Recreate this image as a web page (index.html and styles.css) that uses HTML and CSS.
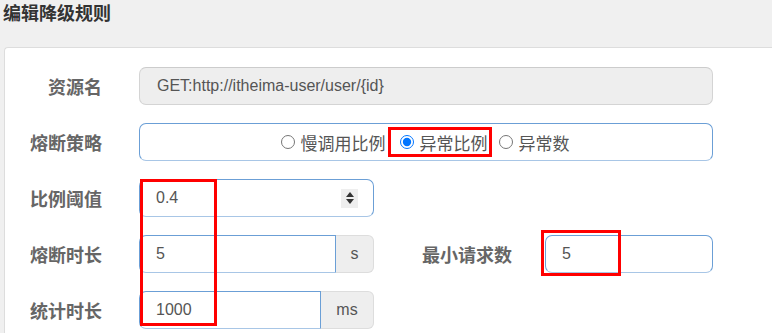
FILE: index.html
```html
<html>
    <head>
        <title>编辑降级规则</title>
        <link rel="stylesheet" href="styles.css">
    </head>
    <body>
        <h1>编辑降级规则</h1>
        <div class="panel">
            <div class="row">
                <label class="label">资源名</label>
                <input class="field readonly wide" type="text" value="GET:http://itheima-user/user/{id}" readonly />
            </div>
            <div class="row">
                <label class="label">熔断策略</label>
                <div class="field active wide radios">
                    <label class="radio"><input type="radio" name="grade" />慢调用比例</label>
                    <label class="radio marked"><input type="radio" name="grade" checked />异常比例</label>
                    <label class="radio"><input type="radio" name="grade" />异常数</label>
                </div>
            </div>
            <div class="row">
                <label class="label">比例阈值</label>
                <div class="field active number">
                    <input type="text" value="0.4" />
                    <span class="spinner"><i class="up"></i><i class="down"></i></span>
                </div>
            </div>
            <div class="row">
                <label class="label">熔断时长</label>
                <div class="group">
                    <input class="field active joined" type="text" value="5" />
                    <span class="addon">s</span>
                </div>
                <label class="label second">最小请求数</label>
                <input class="field active small" type="text" value="5" />
            </div>
            <div class="row">
                <label class="label">统计时长</label>
                <div class="group">
                    <input class="field active joined" type="text" value="1000" />
                    <span class="addon addon-ms">ms</span>
                </div>
            </div>

            <div class="mark mark-column"></div>
            <div class="mark mark-min"></div>
        </div>
    </body>
</html>
```

FILE: styles.css
```css
body {
    background: #f0f0f0;
    color: #555;
    font-family: "Liberation Sans", "Noto Sans CJK SC", sans-serif;
    margin: 0;
}

h1 {
    color: #333;
    font-family: "Noto Sans CJK SC", sans-serif;
    font-size: 18px;
    font-weight: bold;
    line-height: 24px;
    margin: 0;
    padding: 0 0 0 3px;
}

.panel {
    background: #fff;
    border: 1px solid #ddd;
    border-radius: 4px 0 0 0;
    border-right: none;
    display: flex;
    flex-direction: column;
    gap: 18px;
    margin: 23px 0 0 4px;
    padding: 19px 0 20px;
    position: relative;
}

.row {
    align-items: center;
    display: flex;
    height: 38px;
}

.label {
    color: #666;
    flex: none;
    font-family: "Noto Sans CJK SC", sans-serif;
    font-size: 18px;
    font-weight: bold;
    margin-right: 37px;
    text-align: right;
    width: 97px;
}

.label.second {
    margin-right: 33px;
    width: 138px;
}

.field {
    background: #fff;
    border: 1px solid #6b9fd6;
    border-bottom-color: #a8c6e6;
    border-radius: 7px;
    box-sizing: border-box;
    color: #555;
    font-family: "Liberation Sans", sans-serif;
    font-size: 16px;
    height: 38px;
    outline: none;
    padding: 0 16px;
}

.readonly {
    background: #eee;
    border-color: #d4d4d4;
    border-top-color: #ccc;
    padding-left: 17px;
}

.wide {
    width: 574px;
}

.radios {
    align-items: center;
    display: flex;
    font-family: "Noto Sans CJK SC", sans-serif;
    font-size: 17px;
    gap: 2px;
    justify-content: center;
    padding-left: 14px;
}

.radio {
    align-items: center;
    display: inline-flex;
}

.radio input {
    margin: 0 6px 0 0;
    width: 14px;
    height: 14px;
}

.radio.marked {
    border: 3px solid #f00;
    height: 24px;
    margin-right: 5px;
    padding: 0 1px 0 9px;
}

.number {
    align-items: center;
    display: flex;
    padding-right: 15px;
    width: 235px;
}

.number input {
    border: none;
    color: #555;
    flex: 1;
    font-family: "Liberation Sans", sans-serif;
    font-size: 16px;
    min-width: 0;
    outline: none;
    padding: 0;
}

.spinner {
    align-items: center;
    background: #eee;
    display: flex;
    flex-direction: column;
    gap: 2px;
    height: 19px;
    justify-content: center;
    width: 17px;
}

.spinner i {
    border-left: 4px solid transparent;
    border-right: 4px solid transparent;
    height: 0;
    width: 0;
}

.spinner .up {
    border-bottom: 5px solid #333;
}

.spinner .down {
    border-top: 5px solid #333;
}

.group {
    display: flex;
    width: 235px;
}

.joined {
    border-radius: 7px 0 0 7px;
    flex: 1;
    min-width: 0;
}

.addon {
    align-items: center;
    background: #eee;
    border: 1px solid #ddd;
    border-left: none;
    border-radius: 0 6px 6px 0;
    box-sizing: border-box;
    color: #555;
    display: flex;
    font-size: 16px;
    height: 38px;
    justify-content: center;
    width: 38px;
}

.addon-ms {
    width: 53px;
}

.small {
    width: 168px;
}

.mark {
    border: 3px solid #f00;
    box-sizing: border-box;
    position: absolute;
}

.mark-column {
    height: 147px;
    left: 135px;
    top: 131px;
    width: 77px;
}

.mark-min {
    height: 46px;
    left: 536px;
    top: 182px;
    width: 80px;
}
```
